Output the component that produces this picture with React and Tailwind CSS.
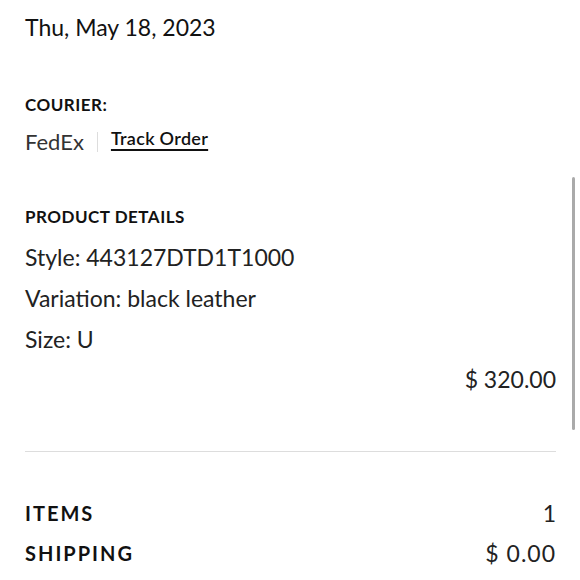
export default function App() {
  const f = { fontFamily: "Lato, 'Open Sans', sans-serif" };
  return (
    <div className="relative w-[580px] h-[580px] overflow-hidden bg-white text-[#111]" style={f}>
      <div className="pl-[25px] pr-[24px]">
        <div className="pt-[12px] text-[23px] leading-[30px]">Thu, May 18, 2023</div>
        <div className="mt-[53px] text-[17px] font-bold leading-[20px] tracking-[0.5px]">COURIER:</div>
        <div className="mt-[16px] flex items-center h-[22px]">
          <span className="text-[22px] text-[#333] leading-[22px]">FedEx</span>
          <span className="mx-[13px] w-px h-[20px] bg-[#ddd]"></span>
          <span className="text-[18px] font-semibold leading-[20px] tracking-[0.3px] underline underline-offset-[4px] decoration-[1.5px] -mt-[9px]">Track Order</span>
        </div>
        <div className="mt-[54px] text-[17px] font-bold leading-[20px] tracking-[0.5px]">PRODUCT DETAILS</div>
        <div className="mt-[16px] flex flex-col gap-[13px] text-[23px] leading-[28px] text-[#222]">
          <div>Style: 443127DTD1T1000</div>
          <div>Variation: black leather</div>
          <div>Size: U</div>
        </div>
        <div className="mt-[12px] text-right text-[23px] leading-[28px] text-[#222]">$ 320.00</div>
        <div className="mt-[58px] h-px bg-[#ddd]"></div>
        <div className="mt-[47px] flex justify-between items-center">
          <span className="text-[20px] font-bold tracking-[2px] leading-[28px]">ITEMS</span>
          <span className="text-[23px] leading-[28px] text-[#222]">1</span>
        </div>
        <div className="mt-[12px] flex justify-between items-center">
          <span className="text-[20px] font-bold tracking-[2px] leading-[28px]">SHIPPING</span>
          <span className="text-[23px] leading-[28px] text-[#222] tracking-[1px]">$ 0.00</span>
        </div>
      </div>
      <div className="absolute right-[5px] top-[177px] w-[3px] h-[253px] rounded-full bg-[#aaa]"></div>
    </div>
  );
}
